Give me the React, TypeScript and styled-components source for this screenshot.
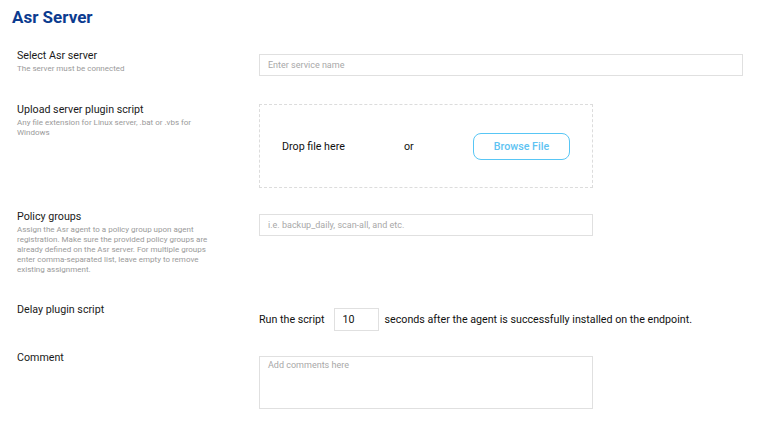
import React from 'react';
import styled, { createGlobalStyle } from 'styled-components';

const GlobalStyle = createGlobalStyle`
    body {
        margin: 0;
        background: #ffffff;
        font-family: Roboto, "Liberation Sans", sans-serif;
        color: #1a1a1a;
    }
`

const Page = styled.div`
    width: 757px;
    height: 433px;
    overflow: hidden;
`

const Title = styled.h1`
    margin: 0;
    padding: 7px 12px 0;
    font-size: 17px;
    line-height: 20px;
    font-weight: 700;
    color: #0b3b8f;
`

const Row = styled.div<{ $top: number }>`
    display: grid;
    grid-template-columns: 259px 1fr;
    margin-top: ${p => p.$top}px;
`

const LabelCol = styled.div`
    padding-left: 17px;
`

const Label = styled.div`
    font-size: 10.7px;
    line-height: 13px;
    color: #1a1a1a;
`

const Hint = styled.div`
    margin-top: 2px;
    width: 200px;
    font-size: 8px;
    line-height: 10px;
    color: #9a9a9a;
`

const Field = styled.div<{ $offset: number }>`
    padding-top: ${p => p.$offset}px;
`

const TextInput = styled.input<{ $width: number }>`
    box-sizing: border-box;
    display: block;
    width: ${p => p.$width}px;
    height: 22px;
    padding: 0 8px;
    border: 1px solid #e0e0e0;
    font-family: inherit;
    font-size: 9px;
    color: #333;
    outline: none;
    &::placeholder {
        color: #a8a8a8;
    }
`

const DropZone = styled.div`
    box-sizing: border-box;
    width: 334px;
    height: 84px;
    border: 1px dashed #dcdcdc;
    display: grid;
    grid-template-columns: 122px 69px auto;
    align-items: center;
    padding-left: 22px;
`

const DropText = styled.span`
    font-size: 10.7px;
    color: #111;
`

const BrowseButton = styled.button`
    box-sizing: border-box;
    width: 97px;
    height: 27px;
    border: 1px solid #58c6f5;
    border-radius: 8px;
    background: #fff;
    color: #5ec3f2;
    font-family: inherit;
    font-size: 10.7px;
    font-weight: 500;
    cursor: pointer;
`

const DelayLine = styled.div`
    display: flex;
    align-items: center;
    font-size: 10.7px;
    color: #111;
`

const NumberBox = styled.input`
    box-sizing: border-box;
    width: 45px;
    height: 23px;
    margin: 0 6px 0 9px;
    padding: 0 8px;
    border: 1px solid #e0e0e0;
    font-family: inherit;
    font-size: 10.7px;
    color: #111;
    outline: none;
`

const CommentBox = styled.textarea`
    box-sizing: border-box;
    display: block;
    width: 334px;
    height: 53px;
    padding: 3px 8px;
    border: 1px solid #e0e0e0;
    font-family: inherit;
    font-size: 9px;
    line-height: 11px;
    resize: none;
    outline: none;
    &::placeholder {
        color: #a8a8a8;
    }
`

export default function App() {
    return (
        <Page>
            <GlobalStyle />
            <Title>Asr Server</Title>

            <Row $top={22}>
                <LabelCol>
                    <Label>Select Asr server</Label>
                    <Hint>The server must be connected</Hint>
                </LabelCol>
                <Field $offset={5}>
                    <TextInput $width={484} placeholder="Enter service name" />
                </Field>
            </Row>

            <Row $top={27}>
                <LabelCol>
                    <Label>Upload server plugin script</Label>
                    <Hint>Any file extension for Linux server, .bat or .vbs for Windows</Hint>
                </LabelCol>
                <Field $offset={1}>
                    <DropZone>
                        <DropText>Drop file here</DropText>
                        <DropText>or</DropText>
                        <BrowseButton>Browse File</BrowseButton>
                    </DropZone>
                </Field>
            </Row>

            <Row $top={22}>
                <LabelCol>
                    <Label>Policy groups</Label>
                    <Hint>
                        Assign the Asr agent to a policy group upon agent registration. Make sure the
                        provided policy groups are already defined on the Asr server. For multiple groups
                        enter comma-separated list, leave empty to remove existing assignment.
                    </Hint>
                </LabelCol>
                <Field $offset={4}>
                    <TextInput $width={334} placeholder="i.e. backup_daily, scan-all, and etc." />
                </Field>
            </Row>

            <Row $top={28}>
                <LabelCol>
                    <Label>Delay plugin script</Label>
                </LabelCol>
                <Field $offset={5}>
                    <DelayLine>
                        Run the script
                        <NumberBox defaultValue="10" />
                        seconds after the agent is successfully installed on the endpoint.
                    </DelayLine>
                </Field>
            </Row>

            <Row $top={20}>
                <LabelCol>
                    <Label>Comment</Label>
                </LabelCol>
                <Field $offset={5}>
                    <CommentBox placeholder="Add comments here" />
                </Field>
            </Row>
        </Page>
    )
}
